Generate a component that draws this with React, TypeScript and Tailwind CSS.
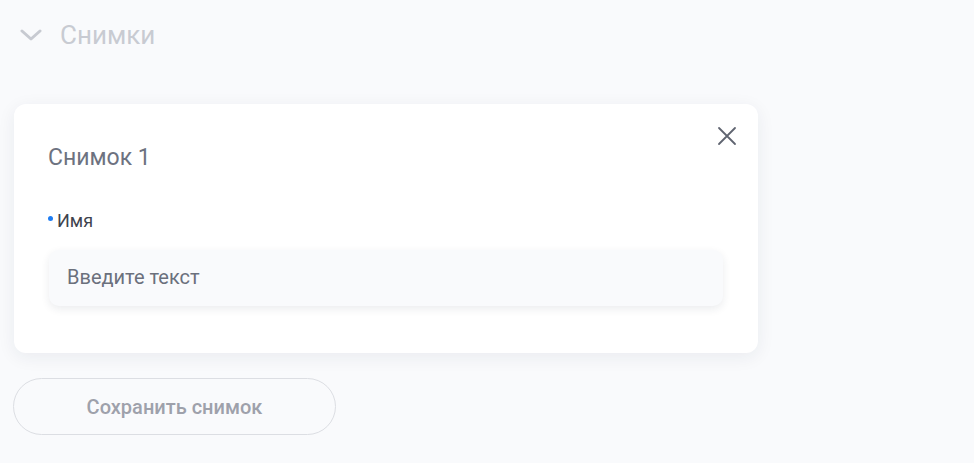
import { useState } from 'react'

export default function App() {
  const [name, setName] = useState('')

  return (
    <div
      className="min-h-screen w-full bg-[#f9fafc]"
      style={{ fontFamily: 'Roboto, "Noto Sans", sans-serif' }}
    >
      {/* Заголовок секции */}
      <div className="flex items-center h-[70px] pl-[20px]">
        <svg width="22" height="14" viewBox="0 0 22 14" fill="none" className="mr-[18px]">
          <path d="M2 3l9 8 9-8" stroke="#c7cad1" strokeWidth="3" strokeLinecap="round" strokeLinejoin="round" />
        </svg>
        <span className="text-[26px] text-[#c8cbd2] leading-none">Снимки</span>
      </div>

      <div className="pl-[14px] pt-[34px]">
        {/* Карточка снимка */}
        <div className="relative w-[744px] bg-white rounded-[12px] shadow-[0_4px_18px_rgba(30,40,70,0.07)] pl-[34px] pr-[35px] pt-[40px] pb-[47px]">
          <button className="absolute top-[21px] right-[20px] w-[22px] h-[22px] flex items-center justify-center">
            <svg width="20" height="20" viewBox="0 0 20 20" fill="none">
              <path d="M2 2l16 16M18 2L2 18" stroke="#5f6470" strokeWidth="1.8" strokeLinecap="round" />
            </svg>
          </button>

          <h2 className="text-[23px] leading-[28px] text-[#6d7280]">Снимок 1</h2>

          <div className="mt-[37px] flex items-start">
            <span className="w-[5px] h-[5px] rounded-full bg-[#1d7cf2] mt-[7px] mr-[4px]"></span>
            <span className="text-[18px] leading-[24px] text-[#3f434e]">Имя</span>
          </div>

          <input
            value={name}
            onChange={(e) => setName(e.target.value)}
            placeholder="Введите текст"
            className="mt-[17px] w-[674px] ml-[1px] h-[56px] rounded-[10px] bg-[#f9fafc] px-[18px] pb-[2px] text-[20px] text-[#3f434e] placeholder:text-[#6b707c] outline-none shadow-[0_3px_8px_rgba(30,40,70,0.09)]"
          />
        </div>

        {/* Кнопка сохранения */}
        <button className="mt-[25px] -ml-[1px] w-[323px] h-[57px] rounded-full border border-[#dcdee3] text-[20px] font-medium text-[#9ea1ab]">
          Сохранить снимок
        </button>
      </div>
    </div>
  )
}
